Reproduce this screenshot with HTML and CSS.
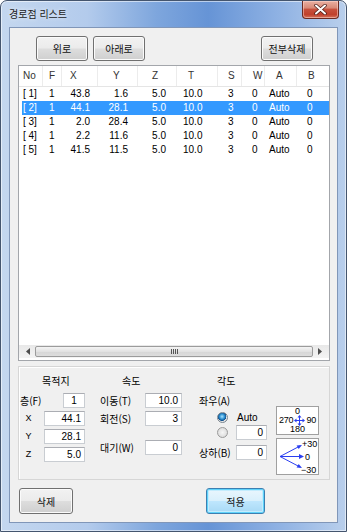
FILE: index.html
```html
<!DOCTYPE html>
<html lang="ko">
<head>
<meta charset="utf-8">
<title>경로점 리스트</title>
<link rel="stylesheet" href="styles.css">
</head>
<body>
<div class="window">
  <div class="titlebar">
    <span class="title">경로점 리스트</span>
    <div class="close">
      <svg width="13" height="11" viewBox="0 0 13 11"><path d="M2 1.5 L11 9.5 M11 1.5 L2 9.5" stroke="#4a1a14" stroke-width="3.4" stroke-linecap="round"/><path d="M2 1.5 L11 9.5 M11 1.5 L2 9.5" stroke="#ffffff" stroke-width="2" stroke-linecap="round"/></svg>
    </div>
  </div>
  <div class="client">
    <div class="toolbar">
      <div class="btn btn-up">위로</div>
      <div class="btn btn-down">아래로</div>
      <div class="btn btn-clear">전부삭제</div>
    </div>
    <div class="list">
      <div class="lv-row lv-head">
        <div class="c c-no">No</div><div class="c c-f">F</div><div class="c c-x">X</div><div class="c c-y">Y</div><div class="c c-z">Z</div><div class="c c-t">T</div><div class="c c-s">S</div><div class="c c-w">W</div><div class="c c-a">A</div><div class="c c-b">B</div>
      </div>
      <div class="lv-body">
        <div class="lv-row">
          <div class="c c-no">[ 1]</div><div class="c c-f">1</div><div class="c c-x">43.8</div><div class="c c-y">1.6</div><div class="c c-z">5.0</div><div class="c c-t">10.0</div><div class="c c-s">3</div><div class="c c-w">0</div><div class="c c-a">Auto</div><div class="c c-b">0</div>
        </div>
        <div class="lv-row sel">
          <div class="c c-no">[ 2]</div><div class="c c-f">1</div><div class="c c-x">44.1</div><div class="c c-y">28.1</div><div class="c c-z">5.0</div><div class="c c-t">10.0</div><div class="c c-s">3</div><div class="c c-w">0</div><div class="c c-a">Auto</div><div class="c c-b">0</div>
        </div>
        <div class="lv-row">
          <div class="c c-no">[ 3]</div><div class="c c-f">1</div><div class="c c-x">2.0</div><div class="c c-y">28.4</div><div class="c c-z">5.0</div><div class="c c-t">10.0</div><div class="c c-s">3</div><div class="c c-w">0</div><div class="c c-a">Auto</div><div class="c c-b">0</div>
        </div>
        <div class="lv-row">
          <div class="c c-no">[ 4]</div><div class="c c-f">1</div><div class="c c-x">2.2</div><div class="c c-y">11.6</div><div class="c c-z">5.0</div><div class="c c-t">10.0</div><div class="c c-s">3</div><div class="c c-w">0</div><div class="c c-a">Auto</div><div class="c c-b">0</div>
        </div>
        <div class="lv-row">
          <div class="c c-no">[ 5]</div><div class="c c-f">1</div><div class="c c-x">41.5</div><div class="c c-y">11.5</div><div class="c c-z">5.0</div><div class="c c-t">10.0</div><div class="c c-s">3</div><div class="c c-w">0</div><div class="c c-a">Auto</div><div class="c c-b">0</div>
        </div>
      </div>
      <div class="hscroll">
        <div class="sb-arrow"><svg width="4" height="7" viewBox="0 0 4 7"><path d="M4 0 L0 3.5 L4 7 Z" fill="#4d4d4d"/></svg></div>
        <div class="sb-thumb"><span class="grip"></span><span class="grip"></span><span class="grip"></span><span class="grip"></span></div>
        <div class="sb-arrow"><svg width="4" height="7" viewBox="0 0 4 7"><path d="M0 0 L4 3.5 L0 7 Z" fill="#4d4d4d"/></svg></div>
      </div>
    </div>
    <div class="panel">
      <div class="col col-dest">
        <div class="col-title t-dest">목적지</div>
        <div class="frow"><span class="lbl lbl-f">층(F)</span><span class="inp inp-f">1</span></div>
        <div class="frow"><span class="lbl lbl-axis">X</span><span class="inp inp-xyz">44.1</span></div>
        <div class="frow"><span class="lbl lbl-axis">Y</span><span class="inp inp-xyz">28.1</span></div>
        <div class="frow"><span class="lbl lbl-axis">Z</span><span class="inp inp-xyz">5.0</span></div>
      </div>
      <div class="col col-speed">
        <div class="col-title t-speed">속도</div>
        <div class="frow"><span class="lbl">이동(T)</span><span class="inp inp-spd">10.0</span></div>
        <div class="frow"><span class="lbl">회전(S)</span><span class="inp inp-spd">3</span></div>
        <div class="frow frow-wait"><span class="lbl">대기(W)</span><span class="inp inp-spd">0</span></div>
      </div>
      <div class="col col-angle">
        <div class="col-title t-angle">각도</div>
        <div class="angle-body">
          <div class="angle-form">
            <div class="frow"><span class="lbl">좌우(A)</span></div>
            <div class="rrow"><span class="radio on"></span><span class="auto">Auto</span></div>
            <div class="rrow rrow2"><span class="radio"></span><span class="inp inp-ang">0</span></div>
            <div class="frow frow-ud"><span class="lbl">상하(B)</span><span class="inp inp-ang">0</span></div>
          </div>
          <div class="angle-figs">
            <div class="compass">
              <div class="cp-line">0</div>
              <div class="cp-line cp-mid"><span>270</span><svg width="11" height="11" viewBox="0 0 11 11"><path d="M5.5 1 V10 M1 5.5 H10" stroke="#2a3ef0" stroke-width="1"/><path d="M5.5 0 L3.5 2.5 H7.5 Z M5.5 11 L3.5 8.5 H7.5 Z M0 5.5 L2.5 3.5 V7.5 Z M11 5.5 L8.5 3.5 V7.5 Z" fill="#2a3ef0"/></svg><span>90</span></div>
              <div class="cp-line">180</div>
            </div>
            <div class="pitch">
              <svg width="41" height="35" viewBox="0 0 41 35">
                <g stroke="#2a3ef0" stroke-width="1" fill="none">
                  <path d="M3 17.5 L23 7"/>
                  <path d="M3 17.5 L25 17.5"/>
                  <path d="M3 17.5 L23 28"/>
                </g>
                <g fill="#2a3ef0">
                  <path d="M25 6 L19.6 6.4 L21.7 10 Z"/>
                  <path d="M27 17.5 L22 15 L22 20 Z"/>
                  <path d="M25 29 L21.7 25 L19.6 28.6 Z"/>
                </g>
                <g font-family="Liberation Sans, sans-serif" font-size="9" fill="#000">
                  <text x="25" y="8">+30</text>
                  <text x="28" y="21">0</text>
                  <text x="24" y="34">−30</text>
                </g>
              </svg>
            </div>
          </div>
        </div>
      </div>
    </div>
    <div class="footer">
      <div class="btn btn-del">삭제</div>
      <div class="btn btn-apply">적용</div>
    </div>
  </div>
</div>
</body>
</html>
```

FILE: styles.css
```css
* { box-sizing: border-box; }

body {
  margin: 0;
  font-family: "Liberation Sans", "Noto Sans CJK KR", sans-serif;
  font-size: 10px;
  color: #000;
  background: #fff;
}

.window {
  width: 347px;
  height: 532px;
  border: 1px solid #44556e;
  border-radius: 7px 7px 0 0;
  padding: 0 8px 8px 8px;
  display: flex;
  flex-direction: column;
  background:
    linear-gradient(to right, #c4d7ef 0%, #b3cbec 25%, #7ea6dd 45%, #6694d6 60%, #8eb1e3 80%, #b9cfec 100%);
  box-shadow: inset 0 0 0 1px rgba(255,255,255,0.55);
}

.titlebar {
  height: 26px;
  display: flex;
  align-items: flex-start;
  justify-content: space-between;
}

.title {
  font-family: "Noto Sans CJK KR", sans-serif;
  font-size: 10px;
  line-height: 26px;
  color: #1b1b1b;
  text-shadow: 0 0 4px rgba(255,255,255,0.9);
}

.close {
  width: 37px;
  height: 18px;
  margin-right: -1px;
  border: 1px solid #6b2b22;
  border-top: none;
  border-radius: 0 0 4px 4px;
  background: linear-gradient(#eab0a2 0%, #d88a78 40%, #c7503c 50%, #c0412c 80%, #d5735c 100%);
  box-shadow: inset 0 0 0 1px rgba(255,220,210,0.5);
  display: flex;
  align-items: center;
  justify-content: center;
}

.client {
  flex: 1;
  background: #f0f0f0;
  border: 1px solid #8096b8;
  padding: 8px 7px 8px 8px;
  display: flex;
  flex-direction: column;
}

/* buttons */
.btn {
  height: 25px;
  border: 1px solid #707070;
  border-radius: 3px;
  background: linear-gradient(#f2f2f2 0%, #ebebeb 48%, #dddddd 52%, #cfcfcf 100%);
  box-shadow: inset 0 0 0 1px #fbfbfb;
  font-family: "Noto Sans CJK KR", sans-serif;
  font-size: 10px;
  display: flex;
  align-items: center;
  justify-content: center;
  color: #111;
}

.toolbar {
  display: flex;
  height: 25px;
}
.btn-up { width: 52px; margin-left: 18px; }
.btn-down { width: 52px; margin-left: 5px; }
.btn-clear { width: 52px; margin-left: auto; margin-right: 17px; }

/* list view */
.list {
  flex: 1;
  margin-top: 4px;
  border: 1px solid #a3a6ab;
  background: #fff;
  display: flex;
  flex-direction: column;
}

.lv-row {
  display: grid;
  grid-template-columns: 24px 19px 36px 40px 39px 41px 24px 23px 32px 31px;
  height: 14px;
  line-height: 14px;
  white-space: nowrap;
}

.lv-head {
  height: 21px;
  line-height: 20px;
  border-bottom: 1px solid #e5e5e5;
  color: #333;
}
.lv-head .c { border-right: 1px solid #ececec; }
.lv-head .c-b { border-right: none; }

.lv-body { flex: 1; }

.lv-row.sel {
  background: linear-gradient(to right, transparent 3px, #3399ff 3px);
  color: #fff;
}

.c { overflow: hidden; }
.c-no { padding-left: 4px; }
.c-f { padding-left: 6px; }
.c-x { padding-left: 8px; }
.c-y { padding-left: 15px; }
.c-z { padding-left: 14px; }
.c-t { padding-left: 11px; }
.c-s { padding-left: 10px; }
.c-w { padding-left: 11px; }
.c-a { padding-left: 11px; }
.c-b { padding-left: 11px; }

.lv-body .c-x, .lv-body .c-y, .lv-body .c-z { text-align: right; padding-left: 0; }
.lv-body .c-x { padding-right: 8px; }
.lv-body .c-y { padding-right: 10px; }
.lv-body .c-z { padding-right: 11px; }
.lv-body .c-t { padding-left: 6px; }
.lv-body .c-w { padding-left: 10px; }
.lv-body .c-a { padding-left: 4px; }
.lv-body .c-b { padding-left: 10px; }

.hscroll {
  height: 13px;
  margin-bottom: 2px;
  display: flex;
  align-items: center;
  background: linear-gradient(#e8e8e8, #f4f4f4);
  padding: 0 2px;
}
.sb-arrow {
  width: 14px;
  display: flex;
  justify-content: center;
  align-items: center;
}
.sb-thumb {
  flex: 1;
  height: 11px;
  border: 1px solid #9b9b9b;
  border-radius: 2px;
  background: linear-gradient(#f4f4f4, #e2e2e2 50%, #d6d6d6 51%, #dddddd);
  display: flex;
  justify-content: center;
  align-items: center;
  gap: 1px;
}
.grip {
  width: 1px;
  height: 5px;
  background: #555;
}

/* lower panel */
.panel {
  height: 114px;
  margin-top: 5px;
  border: 1px solid #d6d6d6;
  box-shadow: inset 1px 1px 0 #fff;
  background: #f0f0f0;
  display: flex;
  padding-top: 7px;
  font-family: "Noto Sans CJK KR", "Liberation Sans", sans-serif;
}

.col { display: flex; flex-direction: column; }
.col-title {
  height: 14px;
  line-height: 14px;
  margin-bottom: 5px;
  font-size: 10px;
}
.t-dest { padding-left: 23px; }
.t-speed { padding-left: 22px; }
.t-angle { padding-left: 18px; }

.frow {
  display: flex;
  align-items: center;
  justify-content: space-between;
  height: 15px;
  margin-bottom: 3px;
}
.lbl { font-size: 10px; line-height: 15px; }

.inp {
  height: 15px;
  background: #fff;
  border: 1px solid #c9cdd2;
  border-top-color: #abadb3;
  font-family: "Liberation Sans", sans-serif;
  font-size: 10px;
  line-height: 13px;
  text-align: right;
  padding-right: 3px;
}

.col-dest { width: 66px; }
.lbl-f { padding-left: 1px; }
.lbl-axis { width: 19px; text-align: center; font-family: "Liberation Sans", sans-serif; font-size: 9px; }
.inp-f { width: 22px; text-align: center; padding-right: 0; }
.inp-xyz { width: 41px; }

.col-speed { width: 82px; margin-left: 15px; }
.inp-spd { width: 37px; }
.frow-wait { margin-top: 11px; }

.col-angle { margin-left: 17px; }
.angle-body { display: flex; }
.angle-form { width: 68px; display: flex; flex-direction: column; }
.rrow {
  display: flex;
  align-items: center;
  height: 13px;
  padding-left: 18px;
}
.rrow2 { height: 16px; margin-bottom: 3px; }
.radio {
  width: 11px;
  height: 11px;
  border-radius: 50%;
  border: 1px solid #9a9a9a;
  background: radial-gradient(circle at 50% 50%, #f6f6f6 0%, #e2e2e2 60%, #cfcfcf 100%);
}
.radio.on {
  border-color: #7a8690;
  background: radial-gradient(circle at 45% 40%, #a9e4ff 0%, #2d8fd0 35%, #12508c 55%, #e8e8e8 62%, #d6d6d6 100%);
}
.auto {
  margin-left: 9px;
  font-family: "Liberation Sans", sans-serif;
  font-size: 10px;
}
.rrow2 .inp-ang { margin-left: 8px; }
.inp-ang { width: 31px; }
.frow-ud { margin-top: 2px; }

.angle-figs {
  margin-left: 9px;
  margin-top: 13px;
  display: flex;
  flex-direction: column;
  gap: 3px;
}
.compass {
  width: 43px;
  height: 29px;
  background: #fff;
  border: 1px solid #a0a0a0;
  font-family: "Liberation Sans", sans-serif;
  font-size: 9px;
  display: flex;
  flex-direction: column;
  align-items: center;
}
.cp-line { line-height: 9px; height: 9px; }
.cp-mid { display: flex; align-items: center; letter-spacing: -0.2px; }
.cp-mid svg { margin: 0 1px; }
.pitch {
  width: 43px;
  height: 37px;
  background: #fff;
  border: 1px solid #a0a0a0;
  overflow: hidden;
}
.pitch svg { display: block; }

/* footer */
.footer {
  display: flex;
  margin-top: 8px;
  height: 26px;
}
.btn-del { width: 54px; height: 26px; margin-left: 1px; }
.btn-apply {
  width: 59px;
  height: 26px;
  margin-left: 133px;
  border-color: #3c7fb1;
  background: linear-gradient(#eaf6fd 0%, #d9f0fc 48%, #bee6fd 52%, #a7d9f5 100%);
  box-shadow: inset 0 0 0 1px #5fd3fb, inset 0 0 0 2px #c3ecfd;
}
```
